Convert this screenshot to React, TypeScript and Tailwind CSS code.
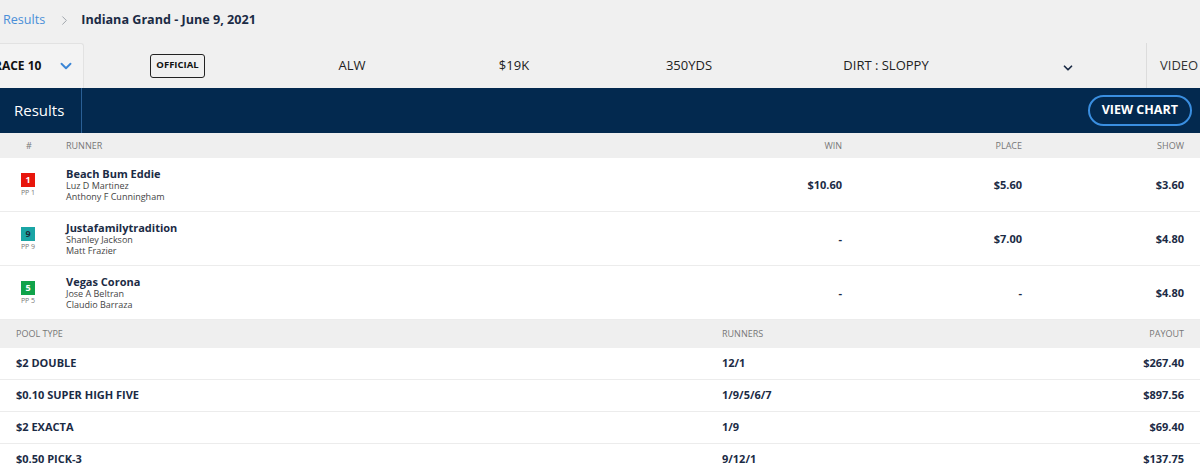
import { ChevronDown, ChevronRight } from 'lucide-react'

const runners = [
  { num: '1', pp: 'PP 1', color: 'bg-[#e8160c] text-white', name: 'Beach Bum Eddie', jockey: 'Luz D Martinez', trainer: 'Anthony F Cunningham', win: '$10.60', place: '$5.60', show: '$3.60' },
  { num: '9', pp: 'PP 9', color: 'bg-[#1aa5a5] text-[#1b2b3a]', name: 'Justafamilytradition', jockey: 'Shanley Jackson', trainer: 'Matt Frazier', win: '-', place: '$7.00', show: '$4.80' },
  { num: '5', pp: 'PP 5', color: 'bg-[#10a34a] text-white', name: 'Vegas Corona', jockey: 'Jose A Beltran', trainer: 'Claudio Barraza', win: '-', place: '-', show: '$4.80' },
]

const pools = [
  { type: '$2 DOUBLE', runners: '12/1', payout: '$267.40' },
  { type: '$0.10 SUPER HIGH FIVE', runners: '1/9/5/6/7', payout: '$897.56' },
  { type: '$2 EXACTA', runners: '1/9', payout: '$69.40' },
  { type: '$0.50 PICK-3', runners: '9/12/1', payout: '$137.75' },
]

export default function App() {
  return (
    <div className="w-[1200px] h-[474px] overflow-hidden bg-white font-['Open_Sans',sans-serif] text-[#1b2b45]">
      {/* Breadcrumb */}
      <div className="bg-[#f0f0f0] h-[43px] flex items-center pl-[3px] pb-[2px] text-[12.6px]">
        <span className="text-[#4a8fd8]">Results</span>
        <ChevronRight className="w-[15px] h-[15px] text-[#9aa0a6] ml-[12px] mr-[9px]" strokeWidth={1.5} />
        <span className="font-bold text-[#1b2b45]">Indiana Grand - June 9, 2021</span>
      </div>

      {/* Race bar */}
      <div className="bg-[#f0f0f0] h-[45px] flex items-center text-[13px] text-[#222] whitespace-nowrap">
        <div className="w-[84px] shrink-0 h-full bg-[#f3f3f3] border border-l-0 border-b-0 border-[#e2e2e2] rounded-tr-[3px] flex items-center overflow-hidden">
          <span className="font-bold text-[12px] text-[#111] ml-[-6px]">RACE 10</span>
          <ChevronDown className="w-[18px] h-[18px] text-[#3b86d6] ml-[16px]" strokeWidth={2.5} />
        </div>
        <div className="w-[187px] shrink-0 flex justify-center">
          <div className="border border-[#222] rounded-[3px] px-[5px] h-[24px] flex items-center text-[9.5px] font-bold text-[#111]">
            OFFICIAL
          </div>
        </div>
        <span className="w-[162px] shrink-0 text-center">ALW</span>
        <span className="w-[162px] shrink-0 text-center">$19K</span>
        <span className="w-[188px] shrink-0 text-center">350YDS</span>
        <span className="w-[206px] shrink-0 text-center">DIRT : SLOPPY</span>
        <div className="w-[157px] shrink-0 flex justify-center pt-[4px]">
          <ChevronDown className="w-[14px] h-[14px] text-[#1b2b45]" strokeWidth={3} />
        </div>
        <div className="h-full border-l border-[#dcdcdc] flex items-center pl-[13px] text-[#333]">
          VIDEO
        </div>
      </div>

      {/* Navy bar */}
      <div className="bg-[#03294f] h-[45px] flex items-center">
        <div className="w-[82px] h-full border-r border-[#2a5f95] flex items-center pl-[14px] text-white text-[15px]">
          Results
        </div>
        <div className="ml-auto mr-[8px] h-[31px] px-[12px] rounded-full border-2 border-[#3a8ee0] flex items-center text-white font-bold text-[12.5px]">
          VIEW CHART
        </div>
      </div>

      {/* Runner header */}
      <div className="bg-[#efefef] h-[25px] grid grid-cols-[66px_1fr_170px_180px_162px] items-center text-[9px] text-[#777] pr-[16px]">
        <span className="text-center pr-[10px] pl-[2px]">#</span>
        <span>RUNNER</span>
        <span className="text-right">WIN</span>
        <span className="text-right">PLACE</span>
        <span className="text-right">SHOW</span>
      </div>

      {runners.map((r) => (
        <div key={r.name} className="h-[54px] border-b border-[#ececec] grid grid-cols-[66px_1fr_170px_180px_162px] items-center pr-[16px]">
          <div className="flex flex-col items-center pr-[10px] mt-[2px]">
            <div className={`w-[14px] h-[14px] flex items-center justify-center text-[9px] font-bold ${r.color}`}>{r.num}</div>
            <span className="text-[7px] leading-[10px] text-[#777] mt-[1px]">{r.pp}</span>
          </div>
          <div className="flex flex-col">
            <span className="font-bold text-[11px] text-[#1b2b45] leading-[13px]">{r.name}</span>
            <span className="text-[9px] leading-[11px] text-[#444]">{r.jockey}</span>
            <span className="text-[9px] leading-[11px] text-[#444]">{r.trainer}</span>
          </div>
          <span className="text-right font-bold text-[11px] mt-[2px]">{r.win}</span>
          <span className="text-right font-bold text-[11px] mt-[2px]">{r.place}</span>
          <span className="text-right font-bold text-[11px] mt-[2px]">{r.show}</span>
        </div>
      ))}

      {/* Pool header */}
      <div className="bg-[#efefef] h-[28px] grid grid-cols-[706px_1fr_auto] items-center text-[9px] text-[#777] pl-[16px] pr-[16px]">
        <span>POOL TYPE</span>
        <span>RUNNERS</span>
        <span className="text-right">PAYOUT</span>
      </div>

      {pools.map((p) => (
        <div key={p.type} className="h-[32px] border-b border-[#ececec] grid grid-cols-[706px_1fr_auto] items-center pl-[16px] pr-[16px] font-bold text-[11px]">
          <span>{p.type}</span>
          <span>{p.runners}</span>
          <span className="text-right">{p.payout}</span>
        </div>
      ))}
    </div>
  )
}
